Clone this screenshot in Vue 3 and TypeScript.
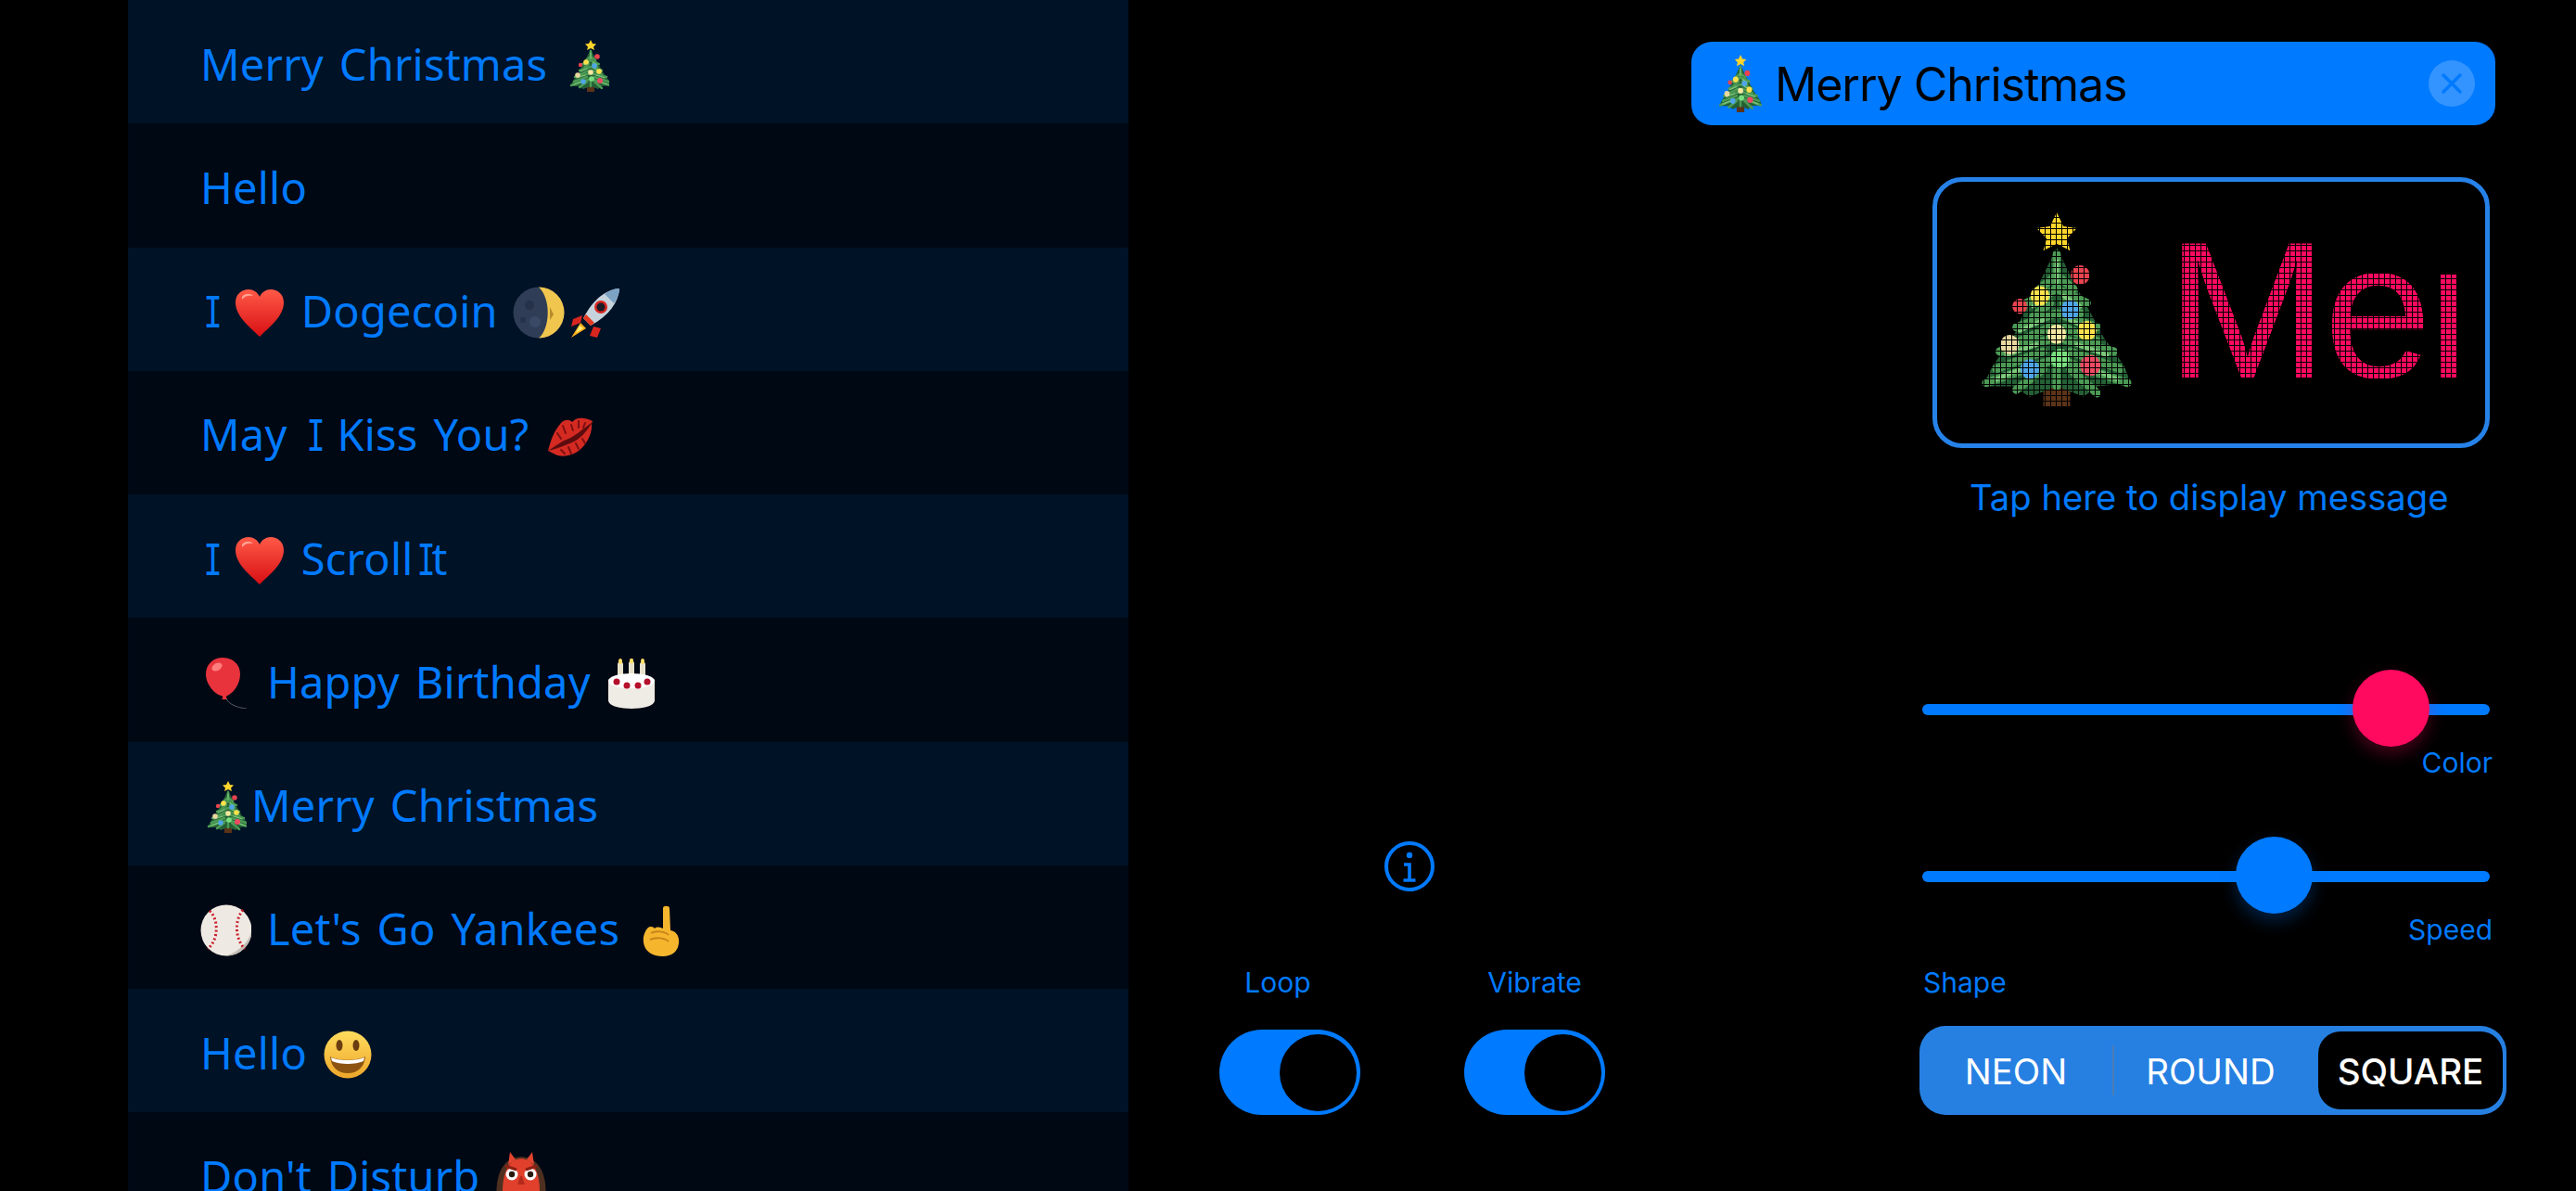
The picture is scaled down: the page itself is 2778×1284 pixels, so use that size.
<script setup lang="ts">
type Part = string | { icon: string; w?: number; h?: number; gap?: number }

const icons: Record<string, string> = {
  tree: `
    <rect x="20" y="47" width="8" height="9" fill="#5b3318"/>
    <path d="M24 10 L29 20 L33 27 L38 36 L44 44 L46 49 L36 50 L32 53 L24 50 L16 53 L11 50 L2 50 L5 44 L11 36 L15 27 L19 20Z" fill="#245f35"/>
    <g stroke="#4c9a55" stroke-width="2.400" stroke-linecap="round" fill="none">
      <path d="M24 12 V22 M24 18 L19 22 M24 18 L29 22"/>
      <path d="M24 22 L15 26 M24 22 L33 26 M22 26 L17 30 M26 26 L31 29"/>
      <path d="M24 29 L12 33 M24 29 L36 33 M22 33 L13 37 M26 33 L36 37"/>
      <path d="M24 36 L7 40 M24 36 L41 40 M20 40 L6 45 M28 40 L43 45"/>
      <path d="M24 42 L3 49 M24 42 L45 49 M20 45 L12 51 M28 45 L36 52 M24 44 V50"/>
    </g>
    <g stroke="#7cc77a" stroke-width="1.200" stroke-linecap="round" fill="none">
      <path d="M24 14 V20 M17 27 L22 24 M31 27 L26 24 M13 34 L20 31 M35 34 L28 31 M9 41 L18 38 M39 41 L30 38 M6 48 L16 44 M42 48 L32 44"/>
    </g>
    <path d="M24 0 L26 4 L30 4.500 L27 7.500 L28 11 L24 9 L20 11 L21 7.500 L18 4.500 L22 4Z" fill="#ffd52b"/>
    <circle cx="31" cy="18" r="2.800" fill="#e8434f"/><circle cx="19" cy="24" r="2.800" fill="#ffe14d"/>
    <circle cx="13" cy="27" r="2.200" fill="#e8434f"/><circle cx="28" cy="28" r="2.800" fill="#4ea5e8"/>
    <circle cx="24" cy="35" r="2.800" fill="#f5e6a0"/><circle cx="33" cy="34" r="2.800" fill="#ffe14d"/>
    <circle cx="10" cy="38" r="2.800" fill="#e9d7a0"/><circle cx="25" cy="42" r="2.800" fill="#7ae07f"/>
    <circle cx="16" cy="45" r="2.800" fill="#4ea5e8"/><circle cx="34" cy="44" r="3" fill="#ee4a63"/>`,
  heart: `
    <defs><linearGradient id="hg" x1="0" y1="0" x2="0" y2="1"><stop offset="0" stop-color="#ff5a48"/><stop offset="1" stop-color="#d80f13"/></linearGradient></defs>
    <path d="M27 52 C16 41 1 30 1 15 C1 6 8 1 15 1 C20 1 25 4 27 9 C29 4 34 1 39 1 C46 1 53 6 53 15 C53 30 38 41 27 52Z" fill="url(#hg)"/>
    <path d="M8 9 C11 5 17 5 20 8 C15 7 11 8 8 12Z" fill="#ffa493"/>`,
  moon: `
    <circle cx="28" cy="28" r="27.500" fill="#2f3d56"/>
    <path d="M28 .500 A27.500 27.500 0 0 1 28 55.500 C40 46 42 14 28 .500Z" fill="#f0c64e"/>
    <circle cx="18" cy="20" r="5" fill="#26324a"/><circle cx="24" cy="38" r="6" fill="#3a4a66"/><circle cx="11" cy="36" r="3" fill="#26324a"/>
    <path d="M40 22 L44 30 L40 36Z" fill="#b98c2b"/>`,
  rocket: `
    <path d="M14 30 L4 34 L2 42 L12 38Z M26 42 L22 52 L30 54 L34 44Z" fill="#d8261f"/>
    <path d="M12 38 L2 54 L18 44Z" fill="#ffb31a"/><path d="M11 41 L7 49 L15 44Z" fill="#fff07a"/>
    <path d="M54 1 C40 2 26 12 15 33 L23 41 C43 30 53 16 54 1Z" fill="#c7d3dc"/>
    <path d="M54 1 C48 1 42 4 38 7 L48 17 C51 13 54 7 54 1Z" fill="#7da3c4"/>
    <path d="M15 33 L23 41 L27 38 L18 29Z" fill="#e8371f"/>
    <circle cx="34" cy="21" r="7" fill="#d8261f"/><circle cx="34" cy="21" r="4.500" fill="#1c1c28"/>`,
  lips: `
    <path d="M0 37 C3 26 6 16 14 7 C18 3 23 3 26 6 C30 1 38 0 48 5 L47 8 C48 18 42 30 33 37 C25 43 14 44 8 41 C5 40 3 38 0 37Z" fill="#d42a22"/>
    <path d="M0 37 C8 32 14 27 22 24 C28 22 38 13 48 6 C42 16 34 25 26 28 C18 31 9 35 0 37Z" fill="#5c0c0e"/>
    <path d="M10 18 L14 24 M16 10 L19 18 M25 9 L27 15 M33 5 L33 12 M40 7 L38 12 M14 36 L18 40 M22 33 L25 40 M30 29 L33 35 M37 24 L40 29" stroke="#7d1012" stroke-width="2" stroke-linecap="round"/>`,
  balloon: `
    <path d="M22 44 C24 50 34 54 44 55" stroke="#555b66" stroke-width="1" fill="none"/>
    <path d="M18 0 C8 0 0 7 0 18 C0 29 10 40 17 41 C19 42 18 44 17 45 L23 45 C22 43 21 42 23 41 C30 38 37 28 37 18 C37 7 29 0 18 0Z" fill="#e8333d"/>
    <ellipse cx="12" cy="10" rx="6" ry="4" fill="#ff7d7d" transform="rotate(-30 12 10)"/>`,
  cake: `
    <rect x="10" y="4" width="6" height="24" rx="2" fill="#e8e2cc"/><rect x="22" y="3" width="6" height="25" rx="2" fill="#e8e2cc"/><rect x="34" y="4" width="6" height="24" rx="2" fill="#e8e2cc"/>
    <ellipse cx="13" cy="3" rx="2" ry="3" fill="#ffe066"/><ellipse cx="25" cy="2.500" rx="2" ry="3" fill="#ffe066"/><ellipse cx="37" cy="3" rx="2" ry="3" fill="#ffe066"/>
    <path d="M0 24 C0 16 50 16 50 24 L50 45 C50 57 0 57 0 45Z" fill="#efece6"/>
    <ellipse cx="25" cy="24" rx="25" ry="8" fill="#fff"/>
    <circle cx="9" cy="25" r="3.500" fill="#b5102c"/><circle cx="20" cy="29" r="3.500" fill="#b5102c"/><circle cx="32" cy="29" r="3.500" fill="#b5102c"/><circle cx="42" cy="25" r="3.500" fill="#b5102c"/>`,
  ball: `
    <circle cx="28" cy="28" r="27.500" fill="#efe9e3"/>
    <path d="M28 55.500 A27.500 27.500 0 0 0 55.500 28 C52 42 42 50 28 55.500Z" fill="#c4bdb5"/>
    <path d="M10 7 C20 16 20 38 8 48 M46 6 C36 18 38 38 48 48" stroke="#c8202c" stroke-width="3" stroke-dasharray="2 2.500" fill="none"/>`,
  finger: `
    <path d="M22 3 C22 0 29 0 29 3 L30 27 C36 28 40 33 39 41 C38 50 31 55 22 55 C10 55 2 49 1 40 C0 33 3 27 6 24 C8 22 12 23 13 25 C16 22 20 24 22 25Z" fill="#f5b62e"/>
    <path d="M9 30 C14 27 24 28 28 32 M8 37 C14 34 24 35 28 39" stroke="#c9831a" stroke-width="2" fill="none"/>`,
  smile: `
    <defs><linearGradient id="sg" x1="0" y1="0" x2="0" y2="1"><stop offset="0" stop-color="#ffdc5e"/><stop offset="1" stop-color="#eea62a"/></linearGradient></defs>
    <circle cx="26" cy="26" r="25.500" fill="url(#sg)"/>
    <ellipse cx="17" cy="16" rx="3.500" ry="6" fill="#6b3d10"/><ellipse cx="35" cy="16" rx="3.500" ry="6" fill="#6b3d10"/>
    <path d="M7 28 C16 33 36 33 45 28 C44 40 36 46 26 46 C16 46 8 40 7 28Z" fill="#8c5410"/>
    <path d="M8 29 C16 33 36 33 44 29 L43 33 C34 37 18 37 9 33Z" fill="#fff"/>`,
  ogre: `
    <path d="M1 56 C-2 26 6 6 27 5 C48 6 56 26 53 56Z" fill="#4f3020"/>
    <path d="M13 14 L15 0 L21 8Z M41 14 L39 0 L33 8Z" fill="#e2442f"/>
    <path d="M8 56 C4 28 12 7 27 7 C42 7 50 28 46 56Z" fill="#e0402c"/>
    <circle cx="17" cy="24" r="6.500" fill="#fff"/><circle cx="37" cy="24" r="6.500" fill="#fff"/>
    <circle cx="17" cy="24" r="3.200" fill="#2a1a10"/><circle cx="37" cy="24" r="3.200" fill="#2a1a10"/>
    <path d="M10 15 L22 19 M44 15 L32 19" stroke="#8c1f14" stroke-width="3"/>
    <path d="M26 26 L28 26 L31 35 L23 35Z" fill="#b32a1c"/>
    <rect x="17" y="42" width="20" height="14" fill="#3a0b08"/><path d="M18 42 L23 42 L20.500 51Z M31 42 L36 42 L33.500 51Z" fill="#fff"/>`,
}

const I: Part = { icon: 'I' }
const rows: Part[][] = [
  ['Merry Christmas ', { icon: 'tree', w: 44, h: 56 }],
  ['Hello'],
  [I, ' ', { icon: 'heart', w: 54, h: 52 }, ' Dogecoin ', { icon: 'moon', w: 56, h: 56 }, { icon: 'rocket', w: 55, h: 55, gap: 5 }],
  ['May ', I, ' Kiss You? ', { icon: 'lips', w: 48, h: 43 }],
  [I, ' ', { icon: 'heart', w: 54, h: 52 }, ' Scroll', I, 't'],
  [{ icon: 'balloon', w: 44, h: 55 }, ' Happy Birthday ', { icon: 'cake', w: 50, h: 54 }],
  [{ icon: 'tree', w: 44, h: 56 }, 'Merry Christmas'],
  [{ icon: 'ball', w: 55, h: 56 }, " Let's Go Yankees ", { icon: 'finger', w: 40, h: 55 }],
  ['Hello ', { icon: 'smile', w: 52, h: 52 }],
  ["Don't Disturb ", { icon: 'ogre', w: 54, h: 56 }],
]

const sliders = [
  { label: 'Color', pos: 464, thumb: 'pink' },
  { label: 'Speed', pos: 338, thumb: 'blue' },
]
const toggles = ['Loop', 'Vibrate']

function emojiMargin(part: { w?: number; gap?: number }) {
  const side = (55 - (part.w ?? 55)) / 2
  return `0 ${side}px 0 ${side + (part.gap ?? 0)}px`
}
</script>

<template>
  <div class="page">
    <ul class="list">
      <li v-for="(row, i) in rows" :key="i" class="row">
        <template v-for="(part, j) in row" :key="j">
          <span v-if="typeof part === 'string'" class="words">{{ part }}</span>
          <span v-else-if="part.icon === 'I'" class="serif-i">I</span>
          <svg
            v-else
            class="emoji"
            :width="part.w"
            :height="part.h"
            :viewBox="`0 0 ${part.w} ${part.h}`"
            :style="{ margin: emojiMargin(part) }"
            v-html="icons[part.icon]"
          />
        </template>
      </li>
    </ul>

    <div class="side">
      <div class="field">
        <svg class="field-tree" width="50" height="62" viewBox="0 0 48 56" preserveAspectRatio="none" v-html="icons.tree" />
        <span class="field-text">Merry Christmas</span>
        <span class="clear">
          <svg width="24" height="24" viewBox="0 0 24 24"><path d="M3 3 L21 21 M21 3 L3 21" stroke="#007aff" stroke-width="3.500" stroke-linecap="round" /></svg>
        </span>
      </div>

      <div class="mid">
        <svg class="info" width="56" height="56" viewBox="0 0 56 56">
          <circle cx="28" cy="28" r="25" fill="none" stroke="#007aff" stroke-width="4" />
          <circle cx="28" cy="16" r="3.200" fill="#007aff" />
          <path d="M22 26 H28 V43 M21.500 43 H34.500" fill="none" stroke="#007aff" stroke-width="3.600" />
        </svg>
        <div class="toggles">
          <div v-for="t in toggles" :key="t" class="toggle-wrap">
            <span class="small">{{ t }}</span>
            <span class="toggle"><span class="knob" /></span>
          </div>
        </div>
      </div>

      <div class="controls">
        <div class="preview">
          <div class="led">
            <svg class="led-tree" width="174" height="210" viewBox="0 0 48 56" preserveAspectRatio="none" v-html="icons.tree" />
            <span class="led-text">Merry</span>
            <span class="led-grid" />
          </div>
        </div>
        <div class="tap">Tap here to display message</div>

        <div v-for="s in sliders" :key="s.label" class="slider">
          <div class="track">
            <span class="thumb" :class="s.thumb" :style="{ left: s.pos + 'px' }" />
          </div>
          <div class="small slider-label">{{ s.label }}</div>
        </div>

        <div class="small shape-label">Shape</div>
        <div class="segments">
          <span class="seg">NEON</span>
          <span class="divider" />
          <span class="seg">ROUND</span>
          <span class="seg selected">SQUARE</span>
        </div>
      </div>
    </div>
  </div>
</template>

<style>
html, body {
  background: #000;
  overflow: hidden;
}
</style>

<style scoped>
.page {
  display: flex;
  width: 2778px;
  height: 1284px;
  overflow: hidden;
  background: #000;
  padding-left: 138px;
  box-sizing: border-box;
}

.list {
  flex: none;
  width: 1079px;
  height: 1284px;
  margin: 0;
  padding: 0;
  list-style: none;
  overflow: hidden;
}

.row {
  display: flex;
  align-items: center;
  height: 133.25px;
  padding: 8px 0 0 78px;
  box-sizing: border-box;
  background: #001226;
  color: #007aff;
  font-family: "Noto Sans", "DejaVu Sans", sans-serif;
  font-size: 47px;
  letter-spacing: 0.2px;
  word-spacing: 4.5px;
  white-space: pre;
}

.row:nth-child(even) {
  background: #000814;
}

.words {
  margin-bottom: 4px;
}

.serif-i {
  flex: none;
  width: 18px;
  margin: 0 1px;
  text-align: center;
  letter-spacing: 0;
  font-family: "DejaVu Sans Mono", monospace;
  font-size: 46.5px;
  transform: scaleX(0.72);
}

.emoji {
  flex: none;
  overflow: hidden;
}

.side {
  flex: 1;
  display: grid;
  grid-template-columns: 853px 708px;
  grid-template-rows: 90px 1fr;
  padding-top: 45px;
  box-sizing: border-box;
  height: 1284px;
  font-family: Inter, "Noto Sans", sans-serif;
}

.field {
  grid-column: 1 / 3;
  width: 867px;
  margin-left: 607px;
  height: 90px;
  display: flex;
  align-items: center;
  background: #007aff;
  border-radius: 22px;
  padding: 0 22px 0 28px;
  box-sizing: border-box;
}

.field-tree {
  flex: none;
}

.field-text {
  flex: 1;
  margin-left: 12px;
  padding-top: 2px;
  font-size: 50px;
  letter-spacing: -1px;
  color: #000;
}

.clear {
  flex: none;
  width: 50px;
  height: 50px;
  border-radius: 50%;
  background: #3394ff;
  display: flex;
  align-items: center;
  justify-content: center;
}

.mid {
  position: relative;
  padding-left: 98px;
  display: flex;
  flex-direction: column;
  align-items: flex-start;
}

.info {
  margin-top: 771px;
  margin-left: 177px;
}

.toggles {
  display: flex;
  gap: 112px;
  margin-top: 79px;
}

.toggle-wrap {
  display: flex;
  flex-direction: column;
  align-items: center;
  gap: 33px;
}

.toggle-wrap:first-child .small {
  margin-right: 26px;
}

.toggle {
  display: flex;
  align-items: center;
  justify-content: flex-end;
  width: 152px;
  height: 92px;
  padding: 0 4px;
  box-sizing: border-box;
  border-radius: 46px;
  background: #007aff;
}

.knob {
  width: 83px;
  height: 83px;
  border-radius: 50%;
  background: #000;
}

.small {
  color: #007aff;
  font-size: 30px;
  line-height: 36px;
}

.controls {
  display: flex;
  flex-direction: column;
  align-items: flex-start;
}

.preview {
  width: 601px;
  height: 292px;
  margin-top: 56px;
  margin-left: 14px;
  box-sizing: border-box;
  border: 5px solid #2682e8;
  border-radius: 32px;
  padding: 8px 31px 8px 14px;
}

.led {
  position: relative;
  height: 100%;
  overflow: hidden;
  display: flex;
  align-items: center;
  padding-left: 28px;
}

.led-tree {
  flex: none;
  margin-top: -6px;
}

.led-text {
  flex: none;
  margin-left: 31px;
  margin-top: -4px;
  font-family: "Liberation Sans", Arial, sans-serif;
  font-size: 210px;
  letter-spacing: -5px;
  line-height: 1;
  color: #ff0a5f;
}

.led-grid {
  position: absolute;
  inset: 0;
  background:
    repeating-linear-gradient(to right, #000 0 1px, transparent 1px 6px),
    repeating-linear-gradient(to bottom, #000 0 1px, transparent 1px 6px);
}

.tap {
  width: 100%;
  margin-top: 30px;
  padding-left: 54px;
  box-sizing: border-box;
  color: #007aff;
  font-size: 38.2px;
  line-height: 46px;
}

.slider {
  width: 612px;
  margin-left: 3px;
  display: flex;
  flex-direction: column;
  margin-top: 200px;
}

.slider + .slider {
  margin-top: 99px;
}

.track {
  position: relative;
  height: 12px;
  border-radius: 6px;
  background: #007aff;
}

.thumb {
  position: absolute;
  top: -37px;
  width: 83px;
  height: 83px;
  border-radius: 50%;
}

.thumb.pink {
  background: #ff0a5f;
  box-shadow: 0 8px 18px rgba(255, 10, 95, 0.28);
}

.thumb.blue {
  background: #007aff;
  box-shadow: 0 8px 18px rgba(0, 122, 255, 0.28);
}

.slider-label {
  text-align: right;
  margin-top: 33px;
  margin-right: -3px;
}

.shape-label {
  margin-left: 4px;
  margin-top: 21px;
}

.segments {
  display: flex;
  align-items: center;
  width: 633px;
  height: 96px;
  margin-top: 29px;
  padding-right: 5px;
  box-sizing: border-box;
  border-radius: 28px;
  background: #2680e2;
  color: #fff;
  font-size: 38.5px;
  line-height: 1;
}

.seg {
  flex: none;
  width: 208px;
  padding-top: 2px;
  text-align: center;
}

.divider {
  flex: none;
  width: 2px;
  height: 54px;
  background: #4a7db8;
}

.seg.selected {
  box-sizing: border-box;
  width: 199px;
  height: 84px;
  line-height: 82px;
  margin-left: 12px;
  border-radius: 24px;
  background: #000;
  font-weight: 500;
}
</style>
